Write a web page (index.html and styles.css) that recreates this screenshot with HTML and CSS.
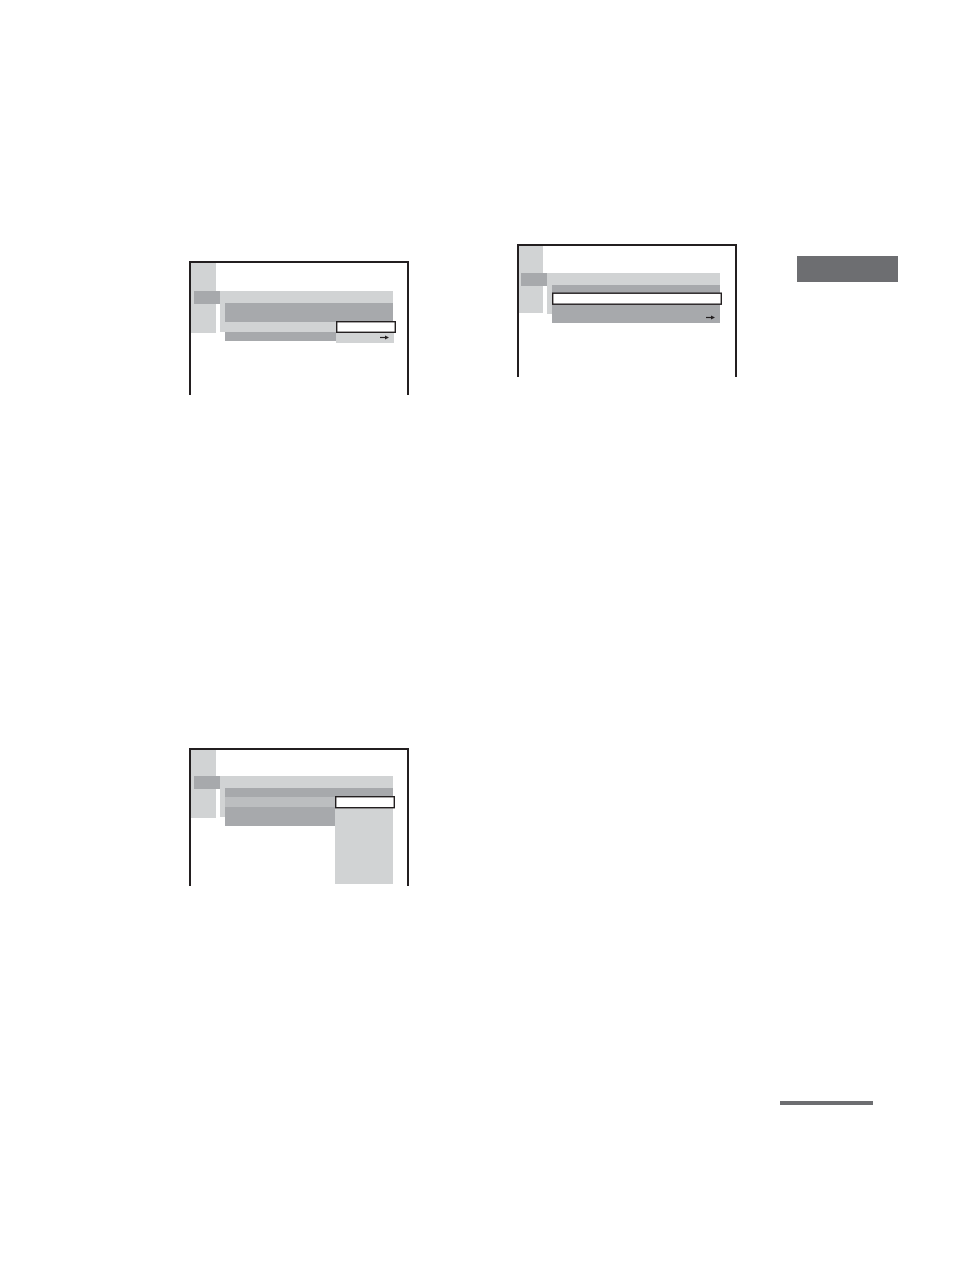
FILE: index.html
```html
<!DOCTYPE html>
<html lang="en">
<head>
  <meta charset="UTF-8" />
  <title>Setup screens</title>
  <link rel="stylesheet" href="styles.css">
</head>
<body>
  <div class="page">

    <div class="col col-left">
      <!-- screen 1: option list under the selected item -->
      <svg class="screen screen-a" width="220" height="134" viewBox="0 0 220 134">
        <rect class="ink" x="0" y="0" width="220" height="2" />
        <rect class="ink" x="0" y="0" width="2" height="134" />
        <rect class="ink" x="218" y="0" width="2" height="134" />
        <rect class="light" x="2" y="2" width="25" height="70" />
        <rect class="dark" x="5" y="30" width="26" height="13" />
        <rect class="light" x="31" y="30" width="173" height="41" />
        <rect class="dark" x="36" y="42" width="168" height="19" />
        <rect class="dark" x="36" y="71" width="111" height="9" />
        <rect class="light" x="147" y="71" width="58" height="11" />
        <rect class="select" x="147.7" y="60.7" width="58.6" height="10.6" />
        <line class="arrow" x1="191" y1="76.5" x2="197" y2="76.5" />
        <polygon class="ink" points="196,74.5 200,76.5 196,78.5" />
      </svg>

      <!-- screen 3: long option column -->
      <svg class="screen screen-c" width="220" height="138" viewBox="0 0 220 138">
        <rect class="ink" x="0" y="0" width="220" height="2" />
        <rect class="ink" x="0" y="0" width="2" height="138" />
        <rect class="ink" x="218" y="0" width="2" height="138" />
        <rect class="light" x="2" y="2" width="25" height="68" />
        <rect class="dark" x="5" y="28" width="26" height="13" />
        <rect class="light" x="31" y="28" width="173" height="41" />
        <rect class="dark" x="36" y="40" width="168" height="9" />
        <rect class="mid" x="36" y="49" width="110" height="10" />
        <rect class="dark" x="36" y="59" width="110" height="19" />
        <rect class="light" x="146" y="59" width="58" height="77" />
        <rect class="select" x="146.7" y="48.7" width="58.6" height="11" />
      </svg>
    </div>

    <div class="col col-right">
      <!-- screen 2: full-width selected row -->
      <svg class="screen screen-b" width="220" height="133" viewBox="0 0 220 133">
        <rect class="ink" x="0" y="0" width="220" height="2" />
        <rect class="ink" x="0" y="0" width="2" height="133" />
        <rect class="ink" x="218" y="0" width="2" height="133" />
        <rect class="light" x="2" y="2" width="24" height="67" />
        <rect class="dark" x="4" y="29" width="26" height="13" />
        <rect class="light" x="30" y="29" width="173" height="41" />
        <rect class="dark" x="35" y="41" width="168" height="38" />
        <rect class="select" x="35.7" y="49.2" width="168.6" height="11" />
        <line class="arrow" x1="189" y1="73.5" x2="195" y2="73.5" />
        <polygon class="ink" points="194,71.5 198,73.5 194,75.5" />
      </svg>
    </div>

    <div class="side">
      <div class="tab"></div>
      <div class="rule"></div>
    </div>

  </div>
</body>
</html>
```

FILE: styles.css
```css
* {
  box-sizing: border-box;
}

body {
  margin: 0;
  background-color: #ffffff;
  font-family: 'Liberation Sans', Arial, sans-serif;
}

.page {
  display: flex;
  align-items: flex-start;
  width: 954px;
  height: 1269px;
}

.col {
  display: flex;
  flex-direction: column;
  width: 220px;
}

.col-left {
  margin-left: 189px;
  padding-top: 261px;
}

.col-right {
  margin-left: 108px;
  padding-top: 244px;
}

.screen {
  display: block;
}

.screen-c {
  margin-top: 353px;
}

.ink {
  fill: #231f20;
}

.light {
  fill: #d1d3d4;
}

.mid {
  fill: #bcbec0;
}

.dark {
  fill: #a7a9ac;
}

.select {
  fill: #ffffff;
  stroke: #231f20;
  stroke-width: 1.4;
}

.arrow {
  stroke: #231f20;
  stroke-width: 1.2;
}

.side {
  display: flex;
  flex-direction: column;
  margin-left: 43px;
  width: 118px;
  padding-top: 256px;
}

.tab {
  margin-left: 17px;
  width: 101px;
  height: 26px;
  background-color: #6d6e71;
}

.rule {
  margin-top: 819px;
  width: 93px;
  height: 4px;
  background-color: #6d6e71;
}
```
